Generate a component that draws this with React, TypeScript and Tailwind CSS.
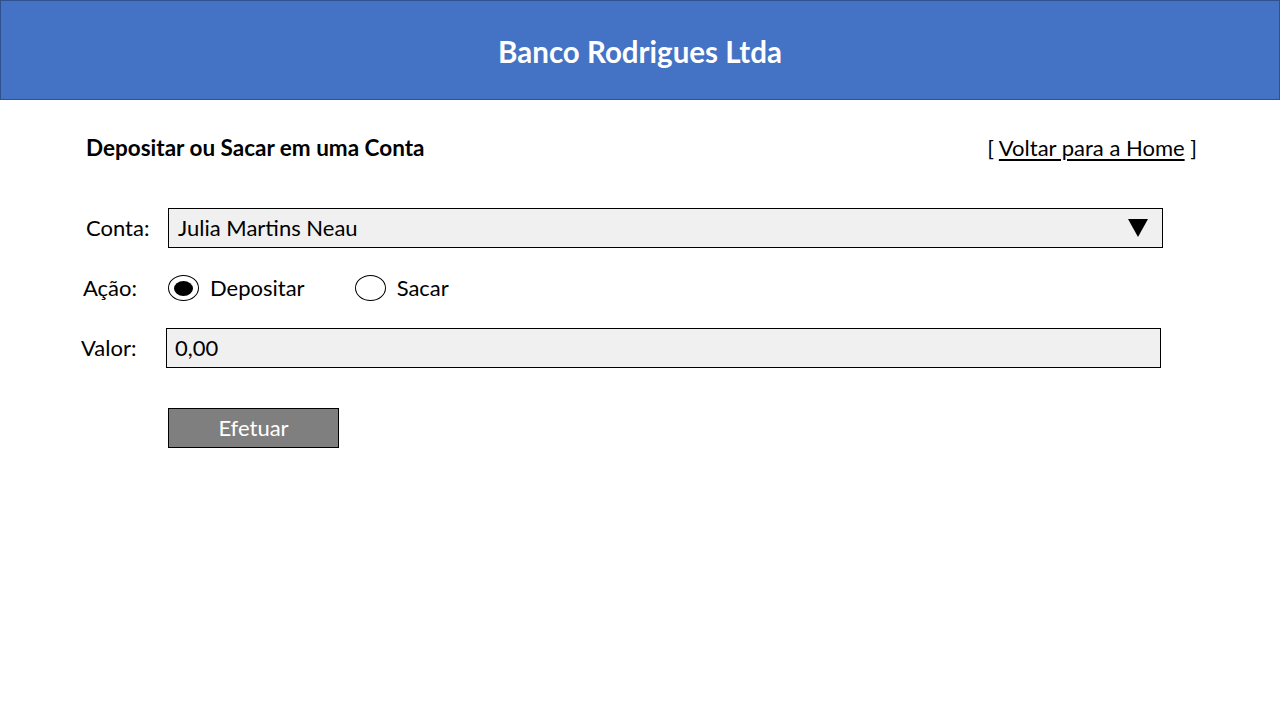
const font = { fontFamily: "Lato, 'Open Sans', sans-serif" };

function Radio({ checked, label }: { checked?: boolean; label: string }) {
  return (
    <div className="flex items-center">
      <span className="w-[31px] h-[26px] rounded-[50%] border border-black bg-white flex items-center justify-center">
        {checked && <span className="w-[19px] h-[15px] rounded-[50%] bg-black" />}
      </span>
      <span className="ml-[11px] pb-[2px] text-[22px] text-black">{label}</span>
    </div>
  );
}

export default function App() {
  return (
    <div className="w-[1280px] h-[720px] bg-white overflow-hidden" style={font}>
      {/* Header */}
      <header className="h-[100px] bg-[#4472c4] border border-[#2f528f] flex items-center justify-center pt-[5px]">
        <h1 className="text-[29.5px] font-bold text-white">Banco Rodrigues Ltda</h1>
      </header>

      {/* Title row */}
      <div className="flex items-center justify-between pl-[86px] pr-[83px] mt-[34px] h-[28px]">
        <span className="text-[22.5px] font-bold text-black">Depositar ou Sacar em uma Conta</span>
        <span className="text-[22px] text-black pb-[2px]">
          [ <a href="#" className="underline underline-offset-[3px]">Voltar para a Home</a> ]
        </span>
      </div>

      {/* Form */}
      <div className="mt-[46px] flex flex-col">
        <div className="flex items-center h-[40px]">
          <span className="ml-[86px] w-[82px] pb-[2px] text-[22px] text-black">Conta:</span>
          <div className="w-[995px] h-[40px] bg-[#f0f0f0] border border-black flex items-center justify-between pl-[9px] pr-[14px]">
            <span className="pb-[2px] text-[22px] text-black">Julia Martins Neau</span>
            <svg width="20" height="18" viewBox="0 0 20 18">
              <path d="M0 0H20L10 18Z" fill="black" />
            </svg>
          </div>
        </div>

        <div className="flex items-center h-[40px] mt-[20px]">
          <span className="ml-[83px] w-[85px] pb-[2px] text-[22px] text-black">Ação:</span>
          <Radio checked label="Depositar" />
          <div className="ml-[50px]">
            <Radio label="Sacar" />
          </div>
        </div>

        <div className="flex items-center h-[40px] mt-[20px]">
          <span className="ml-[81px] w-[85px] pb-[2px] text-[22px] text-black">Valor:</span>
          <div className="w-[995px] h-[40px] bg-[#f0f0f0] border border-black flex items-center pl-[8px]">
            <span className="pb-[2px] text-[22px] text-black">0,00</span>
          </div>
        </div>

        <div className="flex items-center h-[40px] mt-[40px]">
          <button className="ml-[168px] w-[171px] h-[40px] pb-[2px] bg-[#7f7f7f] border border-black text-white text-[22px]">
            Efetuar
          </button>
        </div>
      </div>
    </div>
  );
}
